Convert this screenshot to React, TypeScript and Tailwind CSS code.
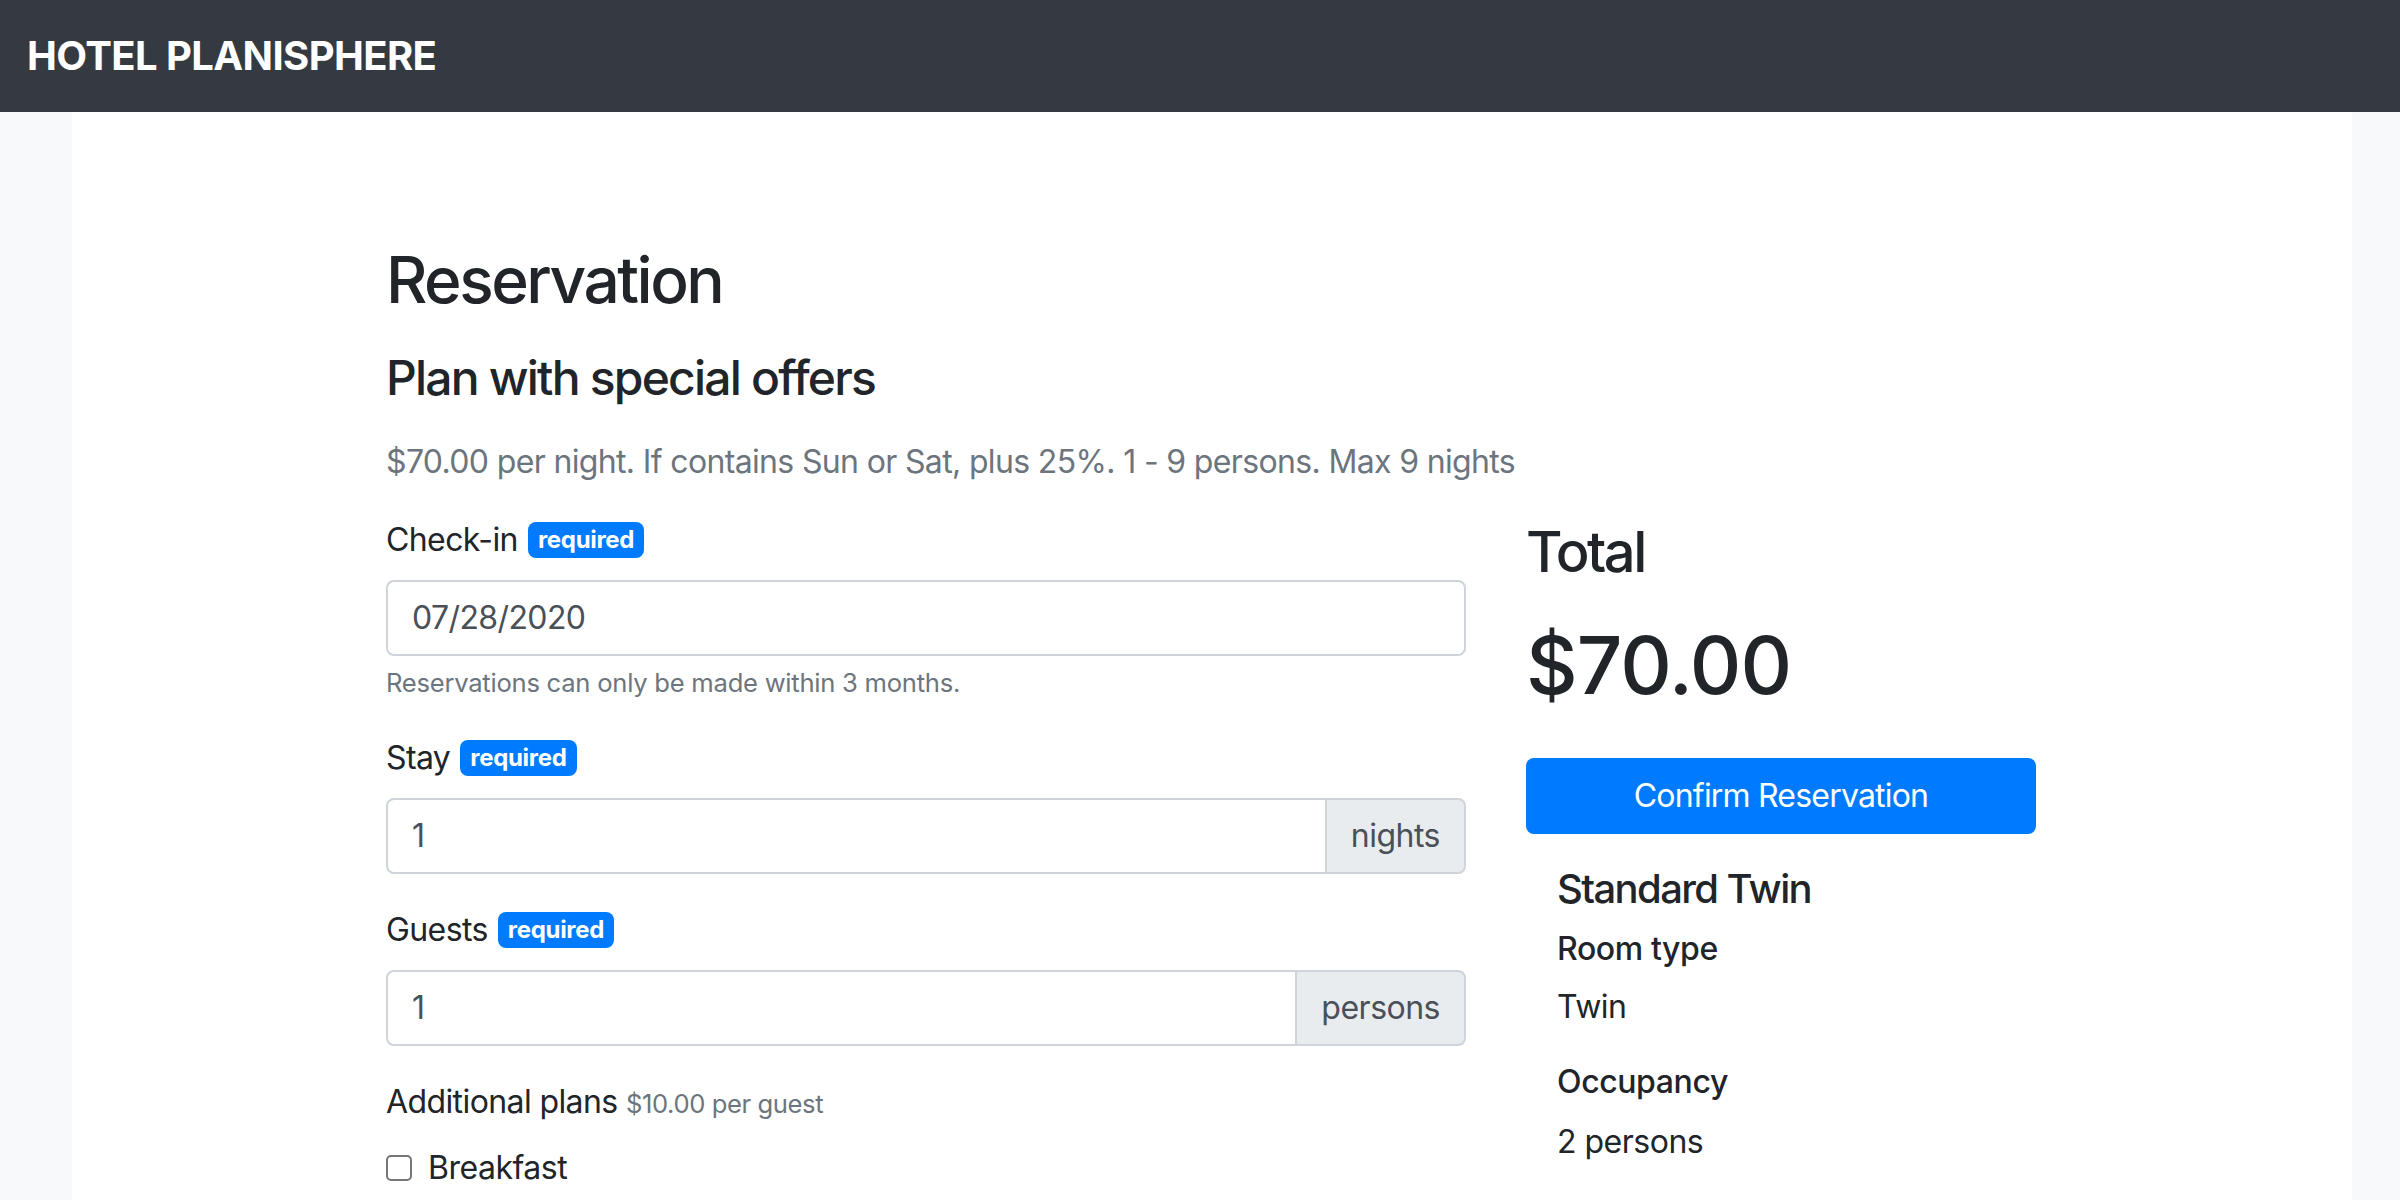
import React from 'react';

function Badge() {
  return (
    <span className="ml-[10px] inline-block rounded-[8px] bg-[#007bff] px-[10px] py-[6px] align-[3px] text-[24px] font-bold leading-none tracking-[-0.3px] text-white">
      required
    </span>
  );
}

function Label({ children }: { children: React.ReactNode }) {
  return (
    <label className="mb-[16px] block text-[32px] leading-[48px] tracking-[-0.6px] text-[#212529]">
      {children}
      <Badge />
    </label>
  );
}

function AddonInput({ value, unit }: { value: string; unit: string }) {
  return (
    <div className="flex h-[76px] w-full">
      <div className="flex flex-1 items-center rounded-l-[8px] border-2 border-[#ced4da] px-[24px] text-[32px] text-[#495057]">
        {value}
      </div>
      <div className="-ml-[2px] flex items-center rounded-r-[8px] border-2 border-[#ced4da] bg-[#e9ecef] px-[24px] text-[32px] tracking-[-0.5px] text-[#495057]">
        {unit}
      </div>
    </div>
  );
}

function Check({ label }: { label: string }) {
  return (
    <div className="flex h-[48px] items-center">
      <span className="mr-[16px] inline-block h-[26px] w-[26px] rounded-[5px] border-2 border-[#767676] bg-white" />
      <span className="text-[32px] tracking-[-0.5px] text-[#212529]">{label}</span>
    </div>
  );
}

export default function App() {
  return (
    <div className="h-[1200px] overflow-hidden bg-[#f8f9fa] font-['Inter',sans-serif]">
      <nav className="flex h-[112px] items-center bg-[#343a40] px-[27px]">
        <span className="text-[40px] font-bold tracking-[-0.6px] text-white">HOTEL PLANISPHERE</span>
      </nav>

      <div className="ml-[72px] mr-[48px] h-full bg-white">
        <div className="pl-[314px] pt-[129px]">
          <h2 className="text-[64px] font-medium leading-[77px] tracking-[-2.5px] text-[#212529]">Reservation</h2>
          <h4 className="mt-[31px] text-[48px] font-medium leading-[58px] tracking-[-1.8px] text-[#212529]">
            Plan with special offers
          </h4>
          <p className="mt-[31px] text-[32px] leading-[48px] tracking-[-0.65px] text-[#6c757d]">
            $70.00 per night. If contains Sun or Sat, plus 25%. 1 - 9 persons. Max 9 nights
          </p>

          <div className="mt-[30px] flex gap-[60px]">
            <form className="w-[1080px]">
              <div className="mb-[32px]">
                <Label>Check-in</Label>
                <div className="flex h-[76px] items-center rounded-[8px] border-2 border-[#ced4da] px-[24px] text-[32px] tracking-[-0.6px] text-[#495057]">
                  07/28/2020
                </div>
                <small className="mt-[8px] block text-[25.6px] leading-[38px] tracking-[-0.25px] text-[#6c757d]">
                  Reservations can only be made within 3 months.
                </small>
              </div>

              <div className="mb-[32px]">
                <Label>Stay</Label>
                <AddonInput value="1" unit="nights" />
              </div>

              <div className="mb-[32px]">
                <Label>Guests</Label>
                <AddonInput value="1" unit="persons" />
              </div>

              <div>
                <label className="mb-[16px] block text-[32px] leading-[48px] tracking-[-0.6px] text-[#212529]">
                  Additional plans{' '}
                  <small className="text-[25.6px] tracking-[-0.4px] text-[#6c757d]">$10.00 per guest</small>
                </label>
                <Check label="Breakfast" />
              </div>
            </form>

            <div className="w-[510px]">
              <h3 className="mt-[3px] text-[56px] font-medium leading-[67px] tracking-[-2.5px] text-[#212529]">Total</h3>
              <p className="mt-[31px] text-[80px] font-medium leading-[96px] tracking-[-1px] text-[#212529]">$70.00</p>
              <button
                type="button"
                className="mt-[45px] h-[76px] w-full rounded-[8px] bg-[#007bff] text-[32px] tracking-[-0.8px] text-white"
              >
                Confirm Reservation
              </button>

              <div className="px-[31px] pt-[31px]">
                <h5 className="text-[40px] font-medium leading-[48px] tracking-[-1.6px] text-[#212529]">Standard Twin</h5>
                <dl className="mt-[17px]">
                  <dt className="text-[32px] font-medium leading-[38px] tracking-[-0.4px] text-[#212529]">Room type</dt>
                  <dd className="mt-[15px] text-[32px] leading-[48px] tracking-[-0.5px] text-[#212529]">Twin</dd>
                  <dt className="mt-[32px] text-[32px] font-medium leading-[38px] tracking-[-0.4px] text-[#212529]">Occupancy</dt>
                  <dd className="mt-[17px] text-[32px] leading-[48px] tracking-[-0.5px] text-[#212529]">2 persons</dd>
                </dl>
              </div>
            </div>
          </div>
        </div>
      </div>
    </div>
  );
}
